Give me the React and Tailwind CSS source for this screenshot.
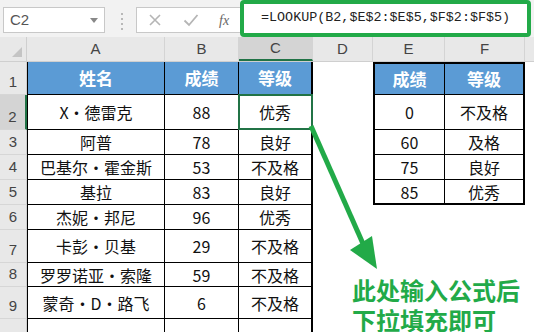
import React from "react";

const FONT = { fontFamily: '"Noto Sans CJK SC", "Liberation Sans", sans-serif' };

const colW = ["w-[138px]", "w-[74px]", "w-[74px]", "w-[60px]", "w-[72px]", "w-[80px]"];
const rowH = ["h-[33px]", "h-[35px]", "h-[25px]", "h-[25px]", "h-[25px]", "h-[25px]", "h-[33px]", "h-[24px]", "h-[32px]", "h-[40px]"];

const leftData = [
  ["X·德雷克", "88", "优秀"],
  ["阿普", "78", "良好"],
  ["巴基尔·霍金斯", "53", "不及格"],
  ["基拉", "83", "良好"],
  ["杰妮·邦尼", "96", "优秀"],
  ["卡彭·贝基", "29", "不及格"],
  ["罗罗诺亚·索隆", "59", "不及格"],
  ["蒙奇·D·路飞", "6", "不及格"],
  ["", "", ""],
];

const rightData = [
  ["0", "不及格"],
  ["60", "及格"],
  ["75", "良好"],
  ["85", "优秀"],
];

const TopBar = () => (
  <div className="h-[37px] bg-[#f2f2f2] flex items-start relative">
    <div className="mt-[7px] ml-[3px] w-[102px] h-[26px] bg-white border border-[#c8c8c8] flex items-center justify-between px-[6px]">
      <span className="text-[15px] text-[#555]" style={{ fontFamily: '"Liberation Sans", sans-serif' }}>C2</span>
      <span className="w-0 h-0 border-l-[4px] border-r-[4px] border-t-[5px] border-l-transparent border-r-transparent border-t-[#888]" />
    </div>
    <div className="mt-[13px] ml-[16px] flex flex-col gap-[3px]">
      <span className="w-[2px] h-[2px] bg-[#b8b8b8]" />
      <span className="w-[2px] h-[2px] bg-[#b8b8b8]" />
      <span className="w-[2px] h-[2px] bg-[#b8b8b8]" />
      <span className="w-[2px] h-[2px] bg-[#b8b8b8]" />
    </div>
    <div className="mt-[7px] ml-[13px] w-[110px] h-[26px] bg-white border border-[#c8c8c8] flex items-center">
      <svg width="14" height="14" viewBox="0 0 14 14" className="ml-[11px]">
        <path d="M2 2 L12 12 M12 2 L2 12" stroke="#b5b5b5" strokeWidth="1.6" />
      </svg>
      <svg width="16" height="14" viewBox="0 0 16 14" className="ml-[21px]">
        <path d="M1.5 7.5 L6 12 L14.5 2" stroke="#b5b5b5" strokeWidth="1.8" fill="none" />
      </svg>
      <span className="ml-[20px] text-[14px] italic text-[#666]" style={{ fontFamily: '"Liberation Serif", serif' }}>fx</span>
    </div>
    <div className="absolute left-[240px] top-0 w-[291px] h-[37px] border-[4px] border-[#22aa48] rounded-[4px] bg-white flex items-center pl-[17px]">
      <span className="text-[13.4px] text-[#222]" style={{ fontFamily: '"Liberation Mono", monospace' }}>
        =LOOKUP(B2,$E$2:$E$5,$F$2:$F$5)
      </span>
    </div>
  </div>
);

const ColHeader = () => {
  const letters = ["A", "B", "C", "D", "E", "F"];
  return (
    <div className="h-[25px] flex bg-[#e8e8e8] border-b border-[#cfcfcf]" style={{ fontFamily: '"Liberation Sans", sans-serif' }}>
      <div className="w-[27px] border-r border-[#cfcfcf] relative">
        <span className="absolute right-[4px] bottom-[4px] w-0 h-0 border-l-[10px] border-t-[10px] border-l-transparent border-t-transparent border-b-0 border-r-[10px] border-r-[#c4c4c4]" />
      </div>
      {letters.map((l, i) => (
        <div
          key={l}
          className={`${colW[i]} border-r border-[#d4d4d4] flex items-center justify-center text-[15px] text-[#444] ${
            l === "C" ? "bg-[#d4d4d4] border-b-2 border-b-[#217346]" : ""
          }`}
        >
          {l}
        </div>
      ))}
      <div className="flex-1" />
    </div>
  );
};

const App = () => {
  return (
    <div className="w-[534px] h-[332px] overflow-hidden bg-white relative" style={FONT}>
      <TopBar />
      <ColHeader />
      <div className="flex flex-col">
        {rowH.map((h, r) => {
          const isHead = r === 0;
          const left = isHead ? ["姓名", "成绩", "等级"] : leftData[r - 1];
          const right = r === 0 ? ["成绩", "等级"] : r <= 4 ? rightData[r - 1] : null;
          return (
            <div key={r} className={`${h} flex`}>
              <div
                className={`w-[27px] flex items-end justify-center pb-[1px] text-[15px] text-[#444] border-b border-[#d6d6d6] ${
                  r === 1 ? "bg-[#d4d4d4] border-r-2 border-r-[#217346]" : "bg-[#e8e8e8] border-r border-r-[#cfcfcf]"
                }`}
                style={{ fontFamily: '"Liberation Sans", sans-serif' }}
              >
                {r < 9 ? r + 1 : ""}
              </div>
              {left.map((t, c) => (
                <div
                  key={c}
                  className={`${colW[c]} relative flex items-center justify-center border-b border-black ${
                    c === 0 ? "border-l border-l-black" : ""
                  } ${c === 2 ? "border-r-2 border-r-black" : "border-r border-r-black"} ${
                    isHead ? "bg-[#5b9bd5] text-white font-bold text-[17px]" : "text-[#111] text-[16px]"
                  }`}
                >
                  {t}
                  {r === 1 && c === 2 && (
                    <div className="absolute -left-[1px] -top-[1px] -right-[2px] -bottom-[1px] border-2 border-[#217346]">
                      <span className="absolute -right-[4px] -bottom-[4px] w-[5px] h-[5px] bg-[#217346] border border-white" />
                    </div>
                  )}
                </div>
              ))}
              <div className={colW[3]} />
              {right ? (
                right.map((t, c) => (
                  <div
                    key={c}
                    className={`${colW[4 + c]} flex items-center justify-center border-black ${
                      c === 0 ? "border-l-2 border-r" : "border-r-2"
                    } ${r === 0 ? "border-t-2" : ""} ${r === 4 ? "border-b-2" : "border-b"} ${
                      isHead ? "bg-[#5b9bd5] text-white font-bold text-[17px]" : "text-[#111] text-[16px]"
                    }`}
                  >
                    {t}
                  </div>
                ))
              ) : (
                <>
                  <div className={colW[4]} />
                  <div className={colW[5]} />
                </>
              )}
              <div className="flex-1" />
            </div>
          );
        })}
      </div>

      <svg className="absolute left-0 top-0 pointer-events-none" width="534" height="332" viewBox="0 0 534 332">
        <line x1="311" y1="126" x2="364" y2="246" stroke="#22aa48" strokeWidth="5" />
        <polygon points="350,250 372,236 377,269" fill="#22aa48" />
      </svg>

      <div className="absolute left-[352px] top-[275px] text-[24px] leading-[30px] font-bold text-[#22aa48]">
        此处输入公式后
        <br />
        下拉填充即可
      </div>
    </div>
  );
};

export default App;
